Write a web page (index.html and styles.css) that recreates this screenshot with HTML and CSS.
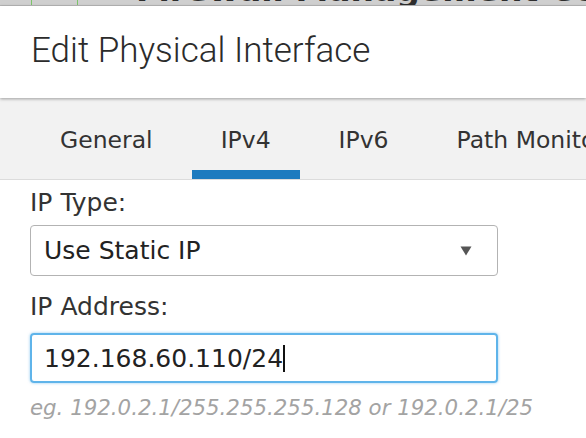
FILE: index.html
```html
<!DOCTYPE html>
<html lang="en">
<head>
<meta charset="utf-8">
<title>Edit Physical Interface</title>
<link rel="stylesheet" href="styles.css">
</head>
<body>
<div class="page">
  <div class="backdrop">
    <span class="cell"></span>
    <span class="cell wide"></span>
    <span class="app-title">Firewall Management Center</span>
  </div>
  <div class="modal">
    <header class="modal-header">
      <h1 class="modal-title">Edit Physical Interface</h1>
    </header>
    <nav class="tabs">
      <span class="tab">General</span>
      <span class="tab active">IPv4</span>
      <span class="tab">IPv6</span>
      <span class="tab">Path Monitoring</span>
    </nav>
    <div class="form">
      <label class="field-label">IP Type:</label>
      <div class="select">
        <span class="select-value">Use Static IP</span>
        <svg class="caret-down" width="12" height="10" viewBox="0 0 12 10"><path d="M0.5 0.5 H11.5 L6 9.5 Z" fill="#555"/></svg>
      </div>
      <label class="field-label second">IP Address:</label>
      <div class="input">
        <span class="input-value">192.168.60.110/24</span><span class="text-caret"></span>
      </div>
      <p class="hint">eg. 192.0.2.1/255.255.255.128 or 192.0.2.1/25</p>
    </div>
  </div>
</div>
</body>
</html>
```

FILE: styles.css
```css
html, body {
  margin: 0;
  padding: 0;
  background: #ffffff;
}

.page {
  width: 586px;
  height: 438px;
  overflow: hidden;
  font-family: "DejaVu Sans", "Noto Sans", sans-serif;
  color: #222;
}

.backdrop {
  height: 5px;
  background: #cfcfcf;
  border-bottom: 1px solid #b8b8b8;
  display: flex;
  overflow: hidden;
}

.cell {
  width: 31px;
  border-right: 1px solid #7cc46a;
  flex: none;
}

.cell.wide {
  width: 45px;
}

.app-title {
  margin-left: 58px;
  margin-top: -25px;
  font-size: 33px;
  font-weight: bold;
  line-height: 30px;
  color: #2e2e2e;
  white-space: nowrap;
}

.modal {
  background: #ffffff;
}

.modal-header {
  position: relative;
  z-index: 1;
  height: 92px;
  background: #ffffff;
  box-shadow: 0 1px 3px rgba(0, 0, 0, 0.35);
  display: flex;
  align-items: center;
  padding-left: 31px;
}

.modal-title {
  margin: 0;
  font-family: Roboto, "Noto Sans", sans-serif;
  font-weight: 300;
  font-size: 35px;
  line-height: 40px;
  color: #2b2b2b;
  padding-bottom: 3px;
}

.tabs {
  display: flex;
  gap: 10px;
  height: 81px;
  background: #f2f2f2;
  border-bottom: 1px solid #dcdcdc;
  padding-left: 31px;
  white-space: nowrap;
  overflow: hidden;
}

.tab {
  flex: none;
  padding: 28px 29px 16px;
  font-size: 23.5px;
  line-height: 28px;
  color: #333;
  border-bottom: 9px solid transparent;
}

.tab.active {
  border-bottom-color: #1d7bbf;
}

.form {
  padding: 9px 0 0 30px;
}

.field-label {
  display: block;
  font-size: 25px;
  line-height: 28px;
  color: #333;
}

.field-label.second {
  margin-top: 17px;
}

.select {
  margin-top: 8px;
  width: 468px;
  height: 51px;
  box-sizing: border-box;
  border: 1px solid #b3b3b3;
  border-radius: 4px;
  display: flex;
  align-items: center;
  justify-content: space-between;
  padding: 0 25px 0 13px;
}

.select-value {
  font-size: 25px;
  color: #222;
}

.caret-down {
  display: block;
}

.input {
  margin-top: 12px;
  width: 468px;
  height: 50px;
  box-sizing: border-box;
  border: 2px solid #5fb4ea;
  border-radius: 4px;
  box-shadow: 0 0 3px rgba(95, 180, 234, 0.7);
  display: flex;
  align-items: center;
  padding-left: 12px;
}

.input-value {
  font-size: 25px;
  color: #222;
}

.text-caret {
  width: 2px;
  height: 27px;
  background: #111;
}

.hint {
  margin: 13px 0 0;
  font-size: 21.3px;
  line-height: 24px;
  font-style: italic;
  color: #a3a3a3;
  white-space: nowrap;
}
```
